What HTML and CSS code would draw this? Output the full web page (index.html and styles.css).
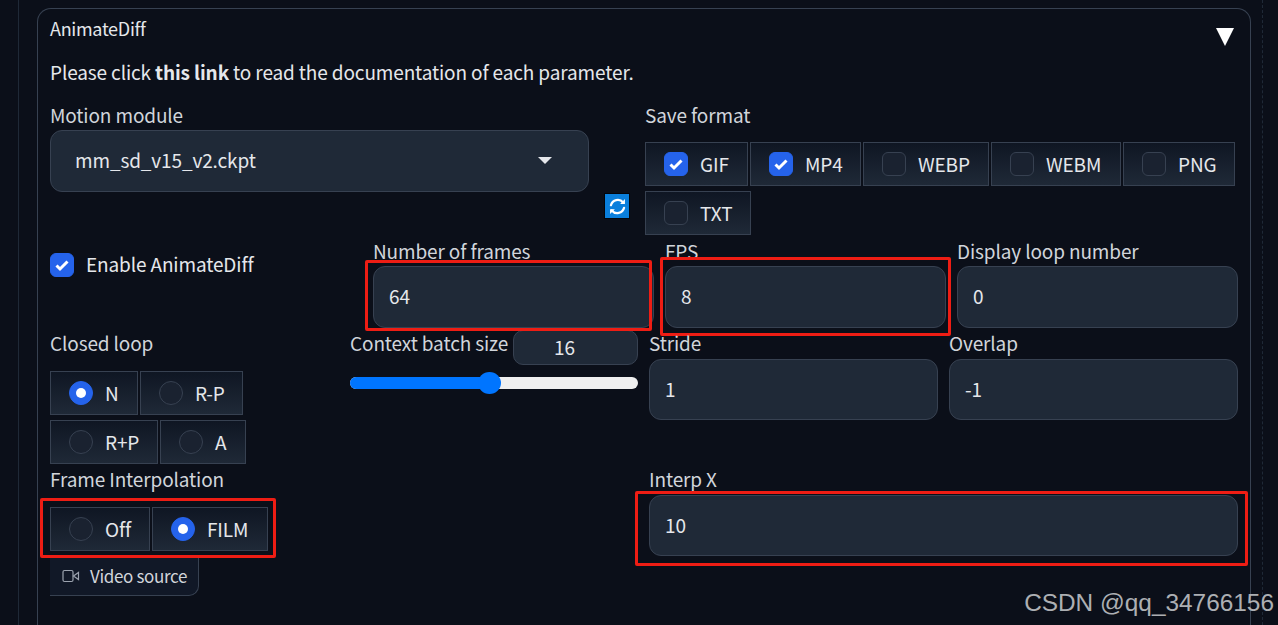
FILE: index.html
```html
<!DOCTYPE html>
<html lang="en">
<head>
<meta charset="utf-8">
<title>AnimateDiff</title>
<link rel="stylesheet" href="styles.css">
</head>
<body>
<div class="frame">
  <section class="panel">
    <header class="panel-head">
      <span class="panel-title">AnimateDiff</span>
      <span class="caret"></span>
    </header>
    <p class="doc">Please click <b>this link</b> to read the documentation of each parameter.</p>

    <div class="row-top">
      <div class="module">
        <label class="lab">Motion module</label>
        <div class="select"><span>mm_sd_v15_v2.ckpt</span><i class="select-arrow"></i></div>
        <button class="refresh" aria-label="Refresh">
          <svg viewBox="0 0 24 24" width="21" height="21" fill="none" stroke="#fff" stroke-width="2.6" stroke-linecap="round"><path d="M4.5 10.5A8 8 0 0 1 18.5 7.5"/><path d="M19.5 13.5A8 8 0 0 1 5.5 16.5"/><path d="M20.5 3.5v5.5h-5.5z" fill="#fff" stroke="none"/><path d="M3.5 20.5V15H9z" fill="#fff" stroke="none"/></svg>
        </button>
      </div>
      <div class="format">
        <label class="lab">Save format</label>
        <div class="chips">
          <div class="chip w-gif"><i class="box on"><svg class="tick" viewBox="0 0 24 24"><path d="M6.5 12.5L10 16l7.5-7.5"/></svg></i><span>GIF</span></div>
          <div class="chip w-mp4"><i class="box on"><svg class="tick" viewBox="0 0 24 24"><path d="M6.5 12.5L10 16l7.5-7.5"/></svg></i><span>MP4</span></div>
          <div class="chip w-webp"><i class="box"></i><span>WEBP</span></div>
          <div class="chip w-webm"><i class="box"></i><span>WEBM</span></div>
          <div class="chip w-png"><i class="box"></i><span>PNG</span></div>
          <div class="chip w-txt"><i class="box"></i><span>TXT</span></div>
        </div>
      </div>
    </div>

    <div class="row-frames">
      <div class="enable"><i class="box on"><svg class="tick" viewBox="0 0 24 24"><path d="M6.5 12.5L10 16l7.5-7.5"/></svg></i><span>Enable AnimateDiff</span></div>
      <div class="triple">
        <div class="field"><label class="lab">Number of frames</label><div class="input">64</div><i class="mark mark-frames"></i></div>
        <div class="field"><label class="lab">FPS</label><div class="input">8</div><i class="mark mark-fps"></i></div>
        <div class="field"><label class="lab">Display loop number</label><div class="input">0</div></div>
      </div>
    </div>

    <div class="row-context">
      <div class="col-left">
        <label class="lab">Closed loop</label>
        <div class="chips loop">
          <div class="chip w-n"><i class="dot on"></i><span>N</span></div>
          <div class="chip w-rp"><i class="dot"></i><span>R-P</span></div>
          <div class="chip w-rpp"><i class="dot"></i><span>R+P</span></div>
          <div class="chip w-a"><i class="dot"></i><span>A</span></div>
        </div>
      </div>
      <div class="col-mid">
        <div class="slider-head"><label class="lab">Context batch size</label><div class="mini">16</div></div>
        <div class="slider"><div class="slider-fill"></div><div class="slider-thumb"></div></div>
      </div>
      <div class="col-right">
        <div class="field"><label class="lab">Stride</label><div class="input">1</div></div>
        <div class="field"><label class="lab">Overlap</label><div class="input">-1</div></div>
      </div>
    </div>

    <div class="row-interp">
      <div class="col-interp">
        <label class="lab">Frame Interpolation</label>
        <div class="chips film">
          <div class="chip w-off"><i class="dot"></i><span>Off</span></div>
          <div class="chip w-film"><i class="dot on"></i><span>FILM</span></div>
          <i class="mark mark-film"></i>
        </div>
        <div class="video">
          <svg viewBox="0 0 18 14" width="18" height="14" fill="none" stroke="#9ca3af" stroke-width="1.2"><rect x="1" y="1.5" width="10" height="11" rx="1.5"/><path d="M11.5 7l5-3.5v7z"/></svg>
          <span>Video source</span>
        </div>
      </div>
      <div class="col-x">
        <div class="field"><label class="lab">Interp X</label><div class="input">10</div><i class="mark mark-x"></i></div>
      </div>
    </div>
  </section>
</div>
<div class="watermark">CSDN @qq_34766156</div>
</body>
</html>
```
FILE: styles.css
```css
* { box-sizing: border-box; }
html, body { margin: 0; height: 625px; overflow: hidden; }
body {
  background: #0b0f19;
  color: #e5e7eb;
  font-family: "Noto Sans CJK SC", "Noto Sans", sans-serif;
  font-size: 19px;
  letter-spacing: -0.13px;
  line-height: 26px;
  position: relative;
}
.frame {
  height: 625px;
  margin-left: 18px;
  margin-right: 15px;
  padding: 8px 0 0 18px;
  border-left: 1px solid #1f2937;
  border-right: 1px dashed #1f2937;
}
.panel {
  width: 1214px;
  height: 617px;
  padding: 8px 8px 0 12px;
  border: 1px solid #374151;
  border-bottom: 0;
  border-radius: 14px 14px 0 0;
}
.panel-head { display: flex; justify-content: space-between; height: 42px; }
.panel-title { font-size: 18px; letter-spacing: -0.3px; line-height: 22px; }
.caret {
  width: 0; height: 0;
  margin: 11px 8px 0 0;
  border-left: 9px solid transparent;
  border-right: 9px solid transparent;
  border-top: 18px solid #fff;
}
.doc { margin: 0 0 16px; height: 28px; line-height: 26px; }
.doc b { font-weight: 700; }
.lab { display: block; height: 26px; line-height: 24px; color: #d1d5db; white-space: nowrap; }

.row-top { display: flex; height: 137px; }
.module { position: relative; flex: none; width: 595px; }
.select {
  width: 539px; height: 62px; margin-top: 1px;
  padding: 0 24px 2px;
  display: flex; align-items: center; justify-content: space-between;
  background: #1f2937; border: 1px solid #374151; border-radius: 12px;
}
.select-arrow {
  width: 0; height: 0; margin-right: 12px;
  border-left: 7px solid transparent;
  border-right: 7px solid transparent;
  border-top: 7px solid #e5e7eb;
}
.refresh {
  position: absolute; left: 555px; top: 91px;
  width: 24px; height: 24px; padding: 0;
  display: flex; align-items: center; justify-content: center;
  background: #0a7fdc; border: 0; outline: 1px solid #02060c;
}
.chips { display: flex; flex-wrap: wrap; gap: 5px 2px; }
.format .chips { margin-top: 13px; width: 595px; }
.chip {
  height: 44px;
  display: flex; align-items: center; gap: 12px;
  padding-left: 18px;
  background: linear-gradient(to bottom, #0f1623, #1f2937);
  border: 1px solid #374151;
}
.w-gif { width: 103px; } .w-mp4 { width: 111px; } .w-webp { width: 126px; }
.w-webm { width: 130px; } .w-png { width: 112px; } .w-txt { width: 106px; }
.w-n { width: 88px; } .w-rp { width: 103px; } .w-rpp { width: 108px; } .w-a { width: 86px; }
.w-off { width: 100px; } .w-film { width: 116px; }
.box, .dot {
  display: block; flex: none; position: relative;
  width: 24px; height: 24px;
  background: #1a2230; border: 1px solid #374151;
}
.box { border-radius: 6px; }
.dot { border-radius: 50%; }
.box.on, .dot.on { background: #2563eb; border-color: #2563eb; }
.tick {
  display: block; width: 24px; height: 24px; margin: -1px;
  fill: none; stroke: #fff; stroke-width: 3;
}
.dot.on::after {
  content: ""; position: absolute; left: 6px; top: 6px;
  width: 10px; height: 10px; border-radius: 50%; background: #fff;
}

.row-frames { display: flex; height: 91px; }
.enable { flex: none; width: 323px; height: 26px; margin-top: 12px; display: flex; gap: 12px; align-items: center; }
.enable span { padding-bottom: 2px; }
.triple { display: grid; grid-template-columns: repeat(3, 281px); gap: 11px; margin-top: -1px; }
.triple .lab { height: 27px; }
.field { position: relative; }
.input {
  height: 62px;
  padding: 0 15px 2px;
  display: flex; align-items: center;
  background: #1f2937; border: 1px solid #374151; border-radius: 12px;
}
.mark { position: absolute; display: block; border: 3px solid #ee1d14; border-radius: 2px; pointer-events: none; }
.mark-frames { left: -8px; top: 21px; width: 287px; height: 71px; }
.mark-fps { left: -5px; top: 18px; width: 291px; height: 79px; }
.mark-x { left: -14px; top: 25px; width: 613px; height: 75px; }
.mark-film { left: -10px; top: -9px; width: 236px; height: 60px; }

.row-context { display: flex; height: 135px; }
.col-left { flex: none; width: 300px; }
.loop { width: 210px; margin-top: 14px; }
.col-mid { flex: none; width: 288px; }
.slider-head { display: flex; justify-content: space-between; align-items: flex-start; }
.mini {
  width: 125px; height: 35px; margin-top: -1px; padding: 0 22px 2px 0;
  display: flex; align-items: center; justify-content: center;
  background: #1f2937; border: 1px solid #374151; border-radius: 10px;
}
.slider { position: relative; height: 12px; margin-top: 12px; background: #efefef; border-radius: 6px; }
.slider-fill { width: 140px; height: 12px; background: #0075ff; border-radius: 6px; }
.slider-thumb { position: absolute; left: 128px; top: -5px; width: 23px; height: 22px; border-radius: 50%; background: #0075ff; }
.col-right { flex: none; margin-left: 11px; display: grid; grid-template-columns: 289px 289px; gap: 11px; }
.col-right .lab { height: 28px; }
.col-right .input, .col-x .input { height: 61px; }

.row-interp { display: flex; }
.col-interp { flex: none; width: 599px; }
.col-interp .lab { line-height: 26px; }
.film { margin-top: 15px; position: relative; width: 220px; }
.video {
  width: 149px; height: 39px; margin-top: 6px;
  display: flex; align-items: center; gap: 10px; padding-left: 12px;
  font-size: 17px; letter-spacing: -0.35px; color: #d1d5db;
  background: #111827;
  border: solid #374151; border-width: 0 1px 1px 0;
  border-radius: 0 0 10px 0;
}
.col-x { flex: none; width: 589px; }
.col-x .lab { height: 29px; line-height: 26px; }
.watermark {
  position: absolute; right: 4px; top: 588px;
  font-family: "Liberation Sans", sans-serif;
  font-size: 24.4px; letter-spacing: 0; line-height: 30px;
  color: #adafb3;
}
```
